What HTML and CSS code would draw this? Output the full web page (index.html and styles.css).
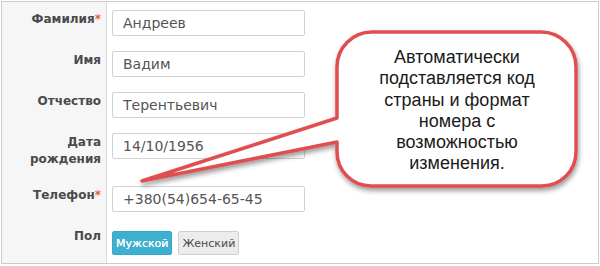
FILE: index.html
```html
<!DOCTYPE html>
<html lang="ru">
<head>
    <meta charset="UTF-8">
    <meta name="viewport" content="width=device-width, initial-scale=1.0">
    <title>Анкета</title>
    <link rel="stylesheet" href="styles.css">
</head>
<body>
    <div class="page">
        <form class="frame">
            <div class="row">
                <label class="label">Фамилия<span class="req">*</span></label>
                <div class="field"><input class="input" type="text" value="Андреев"></div>
            </div>
            <div class="row">
                <label class="label">Имя</label>
                <div class="field"><input class="input" type="text" value="Вадим"></div>
            </div>
            <div class="row">
                <label class="label">Отчество</label>
                <div class="field"><input class="input" type="text" value="Терентьевич"></div>
            </div>
            <div class="row">
                <label class="label">Дата<br>рождения</label>
                <div class="field"><input class="input" type="text" value="14/10/1956"></div>
            </div>
            <div class="row">
                <label class="label">Телефон<span class="req">*</span></label>
                <div class="field"><input class="input" type="text" value="+380(54)654-65-45"></div>
            </div>
            <div class="row">
                <label class="label">Пол</label>
                <div class="field">
                    <div class="toggle">
                        <button type="button" class="btn active">Мужской</button>
                        <button type="button" class="btn">Женский</button>
                    </div>
                </div>
            </div>
        </form>

        <!-- callout over the form -->
        <svg class="callout-shape" width="600" height="266" viewBox="0 0 600 266">
            <defs>
                <filter id="shadow" x="-10%" y="-10%" width="130%" height="140%">
                    <feDropShadow dx="1" dy="3" stdDeviation="2.5" flood-color="#000" flood-opacity="0.4"/>
                </filter>
            </defs>
            <path d="M337 141 L142 180 L337 117 V66 A35 35 0 0 1 372 31 H541 A35 35 0 0 1 576 66 V151 A34 34 0 0 1 542 185 H371 A34 34 0 0 1 337 151 Z"
                  fill="#fff" stroke="#df5050" stroke-width="3.5" stroke-linejoin="round" filter="url(#shadow)"/>
        </svg>
        <div class="callout-text">
            Автоматически<br>
            подставляется код<br>
            страны и формат<br>
            номера с<br>
            возможностью<br>
            изменения.
        </div>
    </div>
</body>
</html>
```

FILE: styles.css
```css
body {
    margin: 0;
    padding: 0;
    background: #fff;
    font-family: "DejaVu Sans", Verdana, sans-serif;
}

.page {
    position: relative;
    width: 600px;
    height: 266px;
}

.frame {
    margin: 1px;
    width: 596px;
    height: 261px;
    border: 1px solid #cbcbcb;
    background: linear-gradient(to right, #f6f6f6 104px, #dcdcdc 104px, #dcdcdc 105px, #fff 105px);
}

.row {
    display: flex;
    align-items: flex-start;
}

.label {
    width: 104px;
    box-sizing: border-box;
    padding: 9px 5px 10px 0;
    text-align: right;
    font-size: 12px;
    font-weight: bold;
    line-height: 17px;
    color: #4a4a4a;
}

.req {
    color: #e8603c;
}

.field {
    padding: 8px 0 7px 6px;
}

.input {
    display: block;
    width: 193px;
    height: 26px;
    box-sizing: border-box;
    margin: 0;
    padding: 0 10px;
    border: 1px solid #d2d2d2;
    border-radius: 2px;
    font-family: "DejaVu Sans", Verdana, sans-serif;
    font-size: 14px;
    color: #555;
    background: #fff;
}

.toggle {
    display: flex;
    gap: 6px;
    margin-top: 4px;
}

.btn {
    height: 24px;
    margin: 0;
    padding: 0 3px;
    border: 1px solid #cfcfcf;
    border-radius: 2px;
    background: #ececec;
    font-family: "DejaVu Sans", Verdana, sans-serif;
    font-size: 11px;
    color: #4a4a4a;
}

.btn.active {
    background: #3db0cf;
    border-color: #3aa8c6;
    color: #fff;
    text-shadow: 0 0 0.5px #fff;
}

.callout-shape {
    position: absolute;
    left: 0;
    top: 0;
    pointer-events: none;
}

.callout-text {
    position: absolute;
    left: 337px;
    top: 46px;
    width: 240px;
    text-align: center;
    font-family: "Liberation Sans", Arial, sans-serif;
    font-size: 18px;
    line-height: 21.3px;
    color: #1a1a1a;
}
```
